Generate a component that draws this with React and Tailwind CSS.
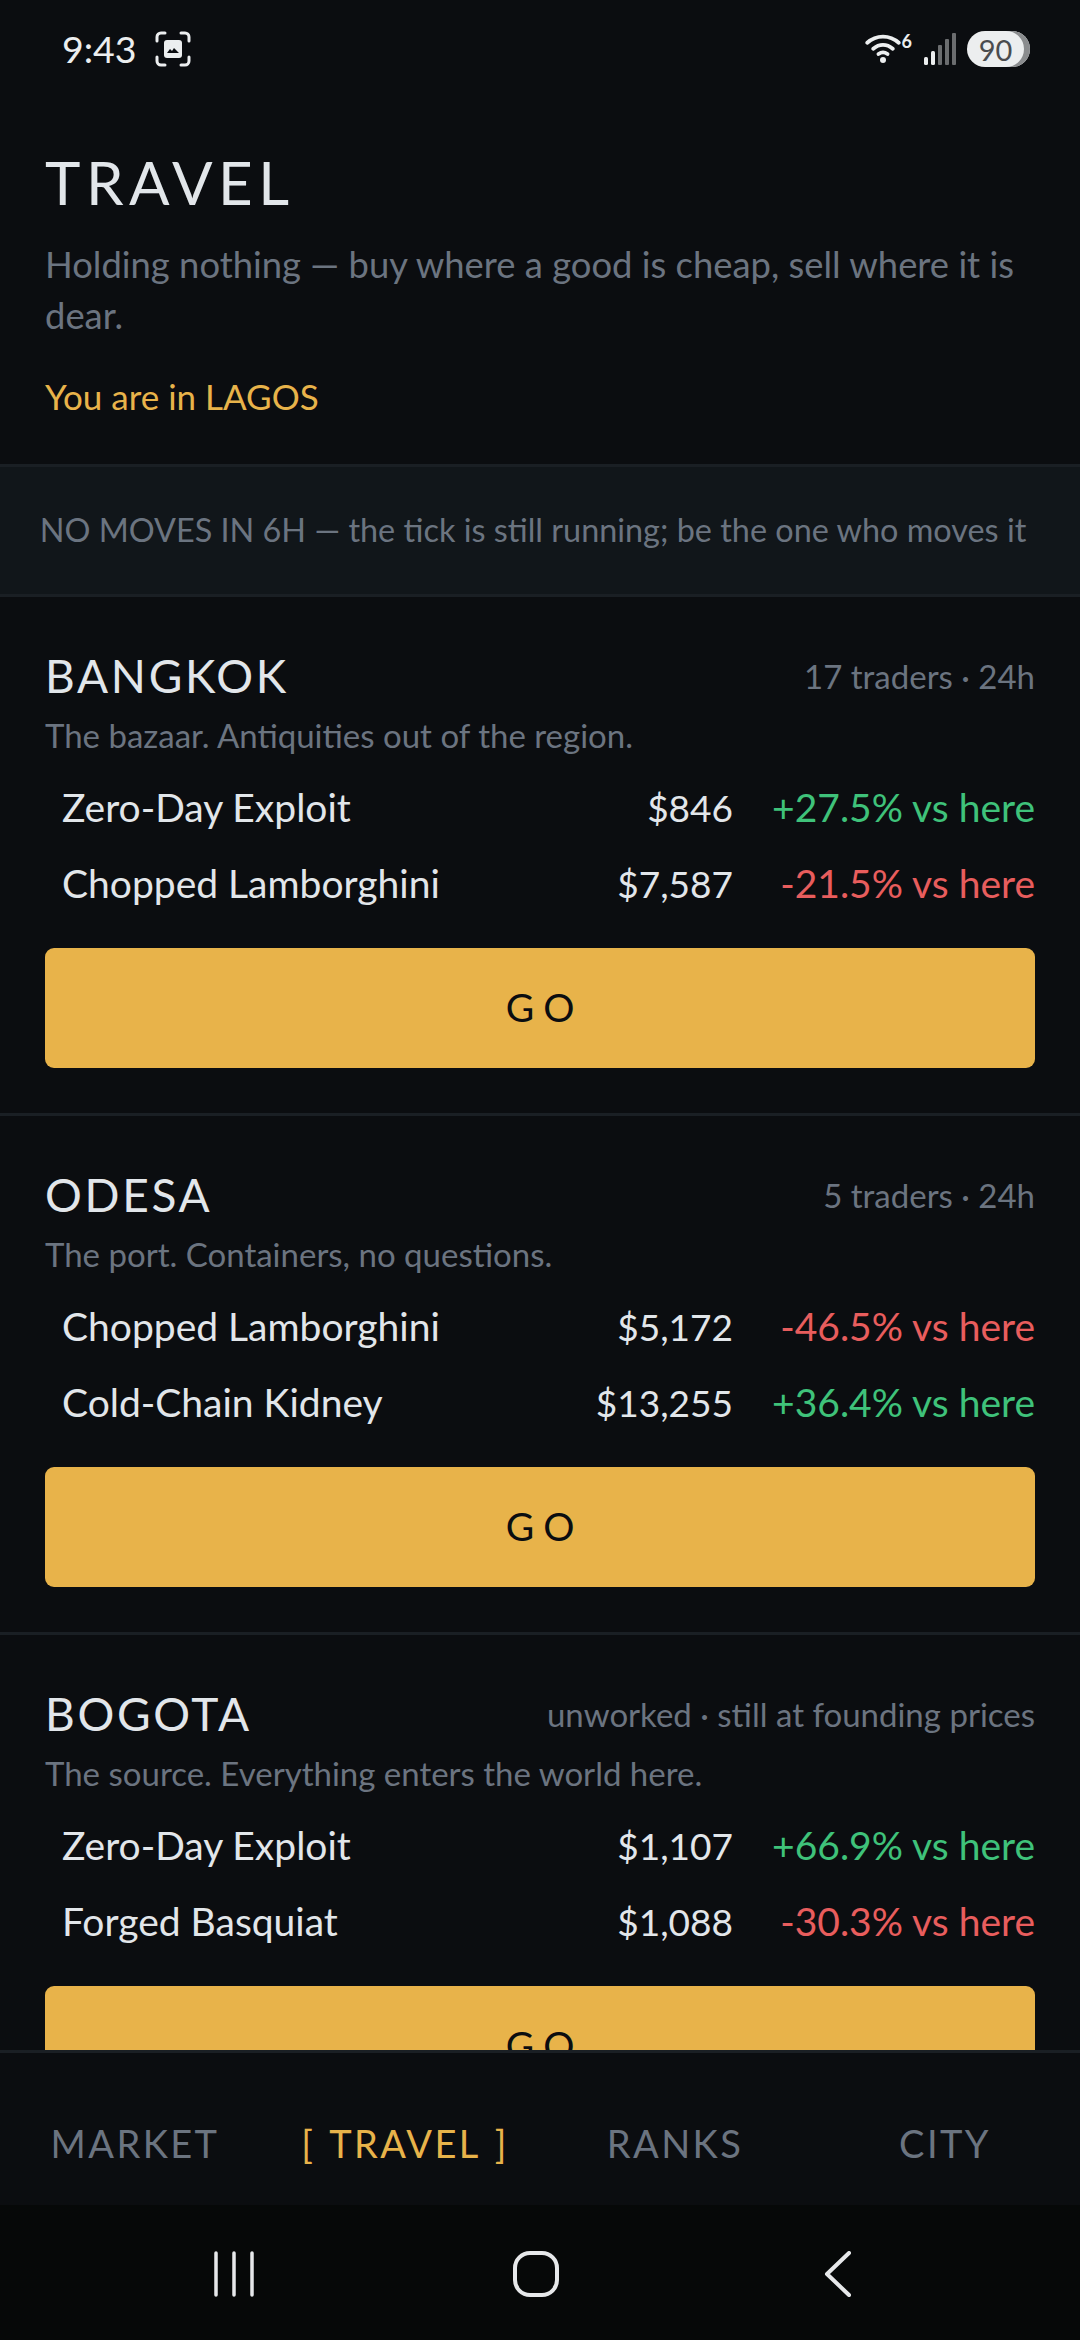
import React from 'react'

const cities = [
  {
    name: 'BANGKOK',
    meta: '17 traders · 24h',
    blurb: 'The bazaar. Antiquities out of the region.',
    rows: [
      { good: 'Zero-Day Exploit', price: '$846', diff: '+27.5% vs here', up: true },
      { good: 'Chopped Lamborghini', price: '$7,587', diff: '-21.5% vs here', up: false },
    ],
  },
  {
    name: 'ODESA',
    meta: '5 traders · 24h',
    blurb: 'The port. Containers, no questions.',
    rows: [
      { good: 'Chopped Lamborghini', price: '$5,172', diff: '-46.5% vs here', up: false },
      { good: 'Cold-Chain Kidney', price: '$13,255', diff: '+36.4% vs here', up: true },
    ],
  },
  {
    name: 'BOGOTA',
    meta: 'unworked · still at founding prices',
    blurb: 'The source. Everything enters the world here.',
    rows: [
      { good: 'Zero-Day Exploit', price: '$1,107', diff: '+66.9% vs here', up: true },
      { good: 'Forged Basquiat', price: '$1,088', diff: '-30.3% vs here', up: false },
    ],
  },
]

function StatusBar() {
  return (
    <div className="flex h-[96px] shrink-0 items-center justify-between pl-[62px] pr-[50px] pt-[2px] text-[#eceeef]">
      <div className="flex items-center gap-[18px]">
        <span className="text-[37.5px] leading-none">9:43</span>
        <svg width="36" height="36" viewBox="0 0 36 36" fill="none">
          <path d="M2 10V6a4 4 0 0 1 4-4h4M26 2h4a4 4 0 0 1 4 4v4M34 26v4a4 4 0 0 1-4 4h-4M10 34H6a4 4 0 0 1-4-4v-4" stroke="currentColor" strokeWidth="3" strokeLinecap="round" />
          <rect x="9" y="9" width="18" height="18" rx="3" fill="currentColor" />
          <path d="M12 22l3-4 2 2 2-3 2 2 3 3z" fill="#0b0d10" />
        </svg>
      </div>
      <div className="flex items-center">
        <svg width="36" height="30" viewBox="0 0 48 40" fill="none" className="mr-[9px] mt-[-2px]">
          <path d="M3 13C15 2 33 2 45 13M11 21c8-7 18-7 26 0M18 28c4-3 8-3 12 0" stroke="currentColor" strokeWidth="5" strokeLinecap="round" />
          <circle cx="24" cy="36" r="4" fill="currentColor" />
        </svg>
        <span className="mb-[16px] ml-[-8px] mr-[11px] text-[18px] font-bold leading-none">6</span>
        <svg width="34" height="34" viewBox="0 0 34 34" className="mr-[10px]">
          <rect x="1" y="25" width="4" height="8" rx="1.5" fill="#eceeef" />
          <rect x="8" y="19" width="4" height="14" rx="1.5" fill="#eceeef" />
          <rect x="15" y="13" width="4" height="20" rx="1" fill="#6b6d6f" />
          <rect x="22" y="7" width="4" height="26" rx="1" fill="#6b6d6f" />
          <rect x="29" y="1" width="4" height="32" rx="1" fill="#6b6d6f" />
        </svg>
        <div className="flex h-[36px] w-[63px] items-center justify-center overflow-hidden rounded-[18px] bg-[#eceeef] pr-[6px] text-[29px] leading-none text-[#4a4c4e] [box-shadow:inset_-6px_0_0_#8a8c8e]">
          90
        </div>
      </div>
    </div>
  )
}

function CityCard({ city }) {
  return (
    <section className="shrink-0 border-b-[3px] border-[#1a1f24] px-[45px] pb-[45.5px] pt-[52px]">
      <div className="flex items-center justify-between">
        <h2 className="text-[46px] leading-[54px] tracking-[2.7px] text-[#e2e6ea]">{city.name}</h2>
        <span className="text-[33px] leading-[54px] text-[#6b7480]">{city.meta}</span>
      </div>
      <p className="mt-[5px] text-[33px] leading-[54px] text-[#6b7480]">{city.blurb}</p>
      <div className="mt-[7px] flex flex-col">
        {city.rows.map((row) => (
          <div key={row.good} className="flex h-[76px] items-center pl-[17px] text-[39px] leading-none">
            <span className="flex-1 text-[#e2e6ea]">{row.good}</span>
            <span className="text-[37px] text-[#e2e6ea]">{row.price}</span>
            <span className={`w-[302px] text-right text-[39px] ${row.up ? 'text-[#3fc27a]' : 'text-[#e85d5d]'}`}>{row.diff}</span>
          </div>
        ))}
      </div>
      <button className="mt-[26.5px] flex h-[120px] w-full items-center justify-center rounded-[9px] bg-[#e8b34a] pl-[9px] text-[39px] tracking-[9px] text-[#0b0d10]">
        GO
      </button>
    </section>
  )
}

function NavItem({ label, active }) {
  return (
    <div className={`flex-1 text-center text-[38px] tracking-[2.4px] [word-spacing:3px] ${active ? 'text-[#e8b34a]' : 'text-[#6b7480]'}`}>
      {active ? `[ ${label} ]` : label}
    </div>
  )
}

export default function App() {
  return (
    <div className="flex h-[2340px] w-[1080px] flex-col overflow-hidden bg-[#0b0d10] font-['Lato',sans-serif]">
      <StatusBar />
      <main className="flex min-h-0 flex-1 flex-col overflow-hidden">
        <header className="shrink-0 px-[45px] pb-[42px] pt-[48px]">
          <h1 className="text-[60px] leading-[76px] tracking-[5.5px] text-[#e2e6ea]">TRAVEL</h1>
          <p className="mt-[19px] text-[36.4px] leading-[51px] text-[#6b7480]">
            Holding nothing — buy where a good is cheap, sell where it is dear.
          </p>
          <p className="mt-[30px] text-[35px] leading-[51px] text-[#e8b34a]">You are in LAGOS</p>
        </header>
        <div className="flex h-[133px] shrink-0 items-center justify-center border-y-[3px] border-[#1a1f24] bg-[#11161a] pr-[14px] text-[32.4px] text-[#6b7480]">
          NO MOVES IN 6H — the tick is still running; be the one who moves it
        </div>
        {cities.map((city) => (
          <CityCard key={city.name} city={city} />
        ))}
      </main>
      <nav className="flex h-[155px] shrink-0 items-center border-t-[3px] border-[#1a1f24] bg-[#0b0d10] pt-[28px]">
        <NavItem label="MARKET" />
        <NavItem label="TRAVEL" active />
        <NavItem label="RANKS" />
        <NavItem label="CITY" />
      </nav>
      <div className="flex h-[135px] shrink-0 items-center justify-center bg-[#060808] pr-[8px] pt-[2px] text-[#e6e8ea]">
        <div className="flex w-[302px] justify-center">
          <svg width="42" height="46" viewBox="0 0 42 46" fill="none" stroke="currentColor" strokeWidth="3.5" strokeLinecap="round">
            <path d="M3 2v42M21 2v42M39 2v42" />
          </svg>
        </div>
        <div className="flex w-[302px] justify-center">
          <svg width="46" height="46" viewBox="0 0 46 46" fill="none" stroke="currentColor" strokeWidth="4">
            <rect x="2" y="2" width="42" height="42" rx="15" />
          </svg>
        </div>
        <div className="flex w-[302px] justify-center">
          <svg width="28" height="46" viewBox="0 0 28 46" fill="none" stroke="currentColor" strokeWidth="4" strokeLinecap="round" strokeLinejoin="round">
            <path d="M25 2L3 23l22 21" />
          </svg>
        </div>
      </div>
    </div>
  )
}
